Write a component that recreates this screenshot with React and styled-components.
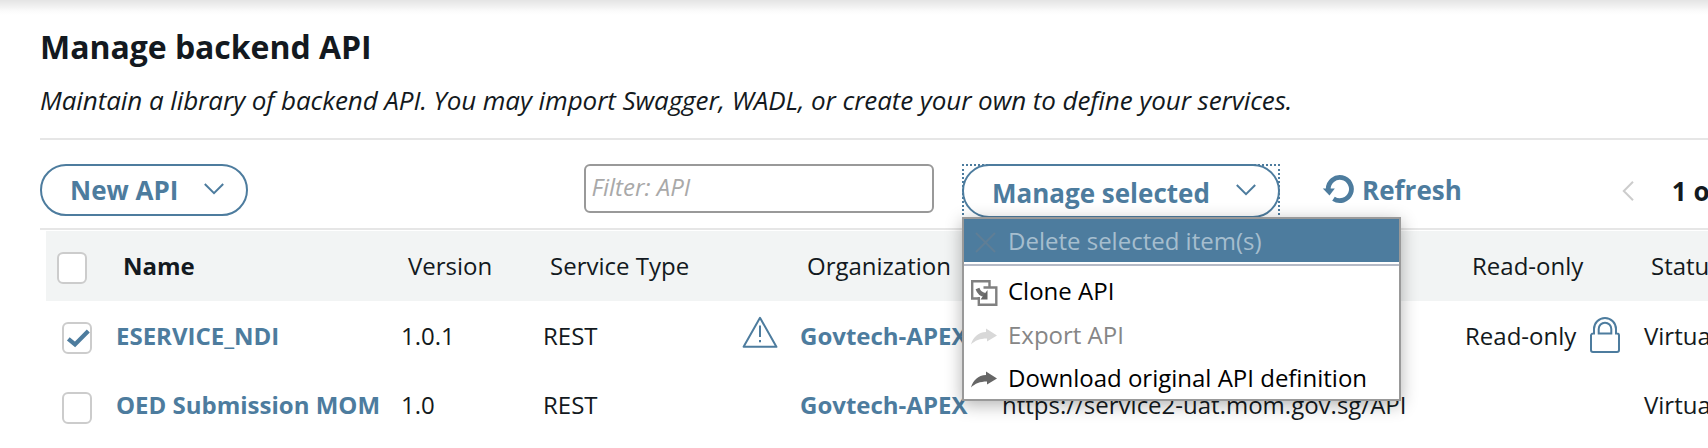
import React from 'react';
import styled, { createGlobalStyle } from 'styled-components';

const blue = '#4d7c9e';
const ink = '#131920';

const GlobalStyle = createGlobalStyle`
  * { box-sizing: border-box; }
  body {
    margin: 0;
    background: #fff;
    color: ${ink};
    font-family: 'Open Sans', 'Noto Sans', sans-serif;
    font-size: 24px;
    overflow: hidden;
  }
  svg { display: block; flex: none; }
`;

const Page = styled.main`
  height: 448px;
  overflow: hidden;
  padding-left: 40px;
  background: linear-gradient(#e4e4e4, #f0f0f0 6px, #fbfbfb 11px, #fff 15px) no-repeat;
`;

const PageHeader = styled.header`
  height: 140px;
  padding-top: 24px;
  border-bottom: 2px solid #e6e6e6;
  white-space: nowrap;
`;

const Title = styled.h1`
  margin: 0;
  font-size: 32px;
  line-height: 45px;
  font-weight: 700;
  letter-spacing: -0.04px;
`;

const Subtitle = styled.p`
  margin: 11px 0 0;
  font-size: 26px;
  line-height: 40px;
  font-style: italic;
  letter-spacing: -0.075px;
`;

const Toolbar = styled.div`
  display: flex;
  align-items: flex-start;
  height: 90px;
  padding-top: 24px;
  border-bottom: 2px solid #e6e6e6;
  white-space: nowrap;

  & > * { flex: none; }
`;

const PillButton = styled.button`
  display: flex;
  align-items: center;
  justify-content: space-between;
  width: ${(p) => p.$width}px;
  height: ${(p) => p.$height}px;
  padding: ${(p) => p.$top || 0}px 22px 0 28px;
  border: 2px solid ${blue};
  border-radius: 27px;
  background: #fff;
  color: ${blue};
  font: 700 26px 'Open Sans', sans-serif;
  line-height: 36px;

  svg { margin-bottom: ${(p) => (p.$top ? 6 : 2)}px; }
`;

const FilterInput = styled.input`
  width: 350px;
  height: 49px;
  margin-left: 336px;
  padding: 0 5.5px 5px;
  border: 2px solid #999;
  border-radius: 6px;
  background: #fff;
  font: italic 24px 'Open Sans', sans-serif;
  &::placeholder { color: #a9a9a9; opacity: 1; }
`;

const MenuAnchor = styled.div`
  position: relative;
  width: 318px;
  height: 55px;
  margin-left: 28px;
  outline: 2px dotted ${blue};
  outline-offset: -2px;
`;

const Menu = styled.ul`
  position: absolute;
  z-index: 2;
  top: 53px;
  left: 0;
  width: 439px;
  height: 184px;
  margin: 0;
  padding: 0;
  list-style: none;
  background: #fff;
  border: 2px solid #999;
  box-shadow: 0 4px 16px rgba(0, 0, 0, 0.3);
`;

const MenuItem = styled.li`
  display: flex;
  align-items: center;
  gap: 10px;
  height: ${(p) => (p.$active ? 43 : 43.4)}px;
  padding-left: 6px;
  color: ${(p) => (p.$disabled ? '#868686' : '#000')};
  line-height: 33px;

  svg { margin-top: 4px; }

  ${(p) => p.$active && `background: ${blue}; color: #a6bece;`}
`;

const MenuDivider = styled.li`
  height: 4px;
  margin-bottom: 3px;
  border-top: 2px solid #fff;
  background: #b5bac6;
`;

const RefreshLink = styled.a`
  display: flex;
  align-items: center;
  gap: 8px;
  height: 52px;
  margin-left: 42px;
  color: ${blue};
  font-weight: 700;
  font-size: 26px;

  svg { margin-bottom: 2px; }
`;

const Pager = styled.div`
  display: flex;
  align-items: center;
  gap: 38px;
  height: 54px;
  margin-left: 160px;
  font-weight: 700;
  font-size: 26px;
`;

const Table = styled.div`
  margin: 1px 0 0 6px;
`;

const Row = styled.div`
  display: grid;
  grid-template-columns: 70px 285px 142px 199px 58px 202px 463px 179px 200px;
  height: ${(p) => (p.$head ? 70 : 69.4)}px;
  background: ${(p) => (p.$head ? '#f2f4f4' : 'transparent')};
`;

const Cell = styled.div`
  display: flex;
  align-items: flex-start;
  padding: ${(p) => (p.$head ? '18px 0 0 7px' : '18px 0 0')};
  line-height: 33px;
  white-space: nowrap;
  font-weight: ${(p) => (p.$bold ? 700 : 400)};
`;

const LinkCell = styled(Cell)`
  font-weight: 700;
  color: ${blue};
`;

const CheckCell = styled.div`
  padding: 21.3px 0 0 ${(p) => (p.$head ? 11 : 16)}px;
`;

const WarnCell = styled.div`
  padding-top: 15px;
`;

const LockSlot = styled.span`
  margin: -2px 0 0 14px;
`;

const Box = styled.span`
  display: block;
  width: 30px;
  height: 32px;
  border: 2px solid #ccc;
  border-radius: 6px;
  background: #fff;
`;

const Chevron = () => (
  <svg width="20" height="12" viewBox="0 0 20 12" fill="none" stroke={blue} strokeWidth="2">
    <path d="M.8 1 10 10.2 19.2 1" />
  </svg>
);

const ChevronLeft = () => (
  <svg width="12" height="20" viewBox="0 0 12 20" fill="none" stroke="#ccc" strokeWidth="2">
    <path d="M11 .8 1.8 10 11 19.2" />
  </svg>
);

const RefreshIcon = () => (
  <svg width="32" height="30" viewBox="0 0 32 30">
    <path d="M6.2 15A11.6 11.6 0 1 1 11.5 24.8" fill="none" stroke={blue} strokeWidth="4.8" />
    <path d="M.8 14.500h12L7.500 21.500z" fill={blue} />
  </svg>
);

const CheckIcon = () => (
  <svg width="26" height="28" viewBox="0 0 26 28" fill="none" stroke={blue} strokeWidth="4.2">
    <path d="M4.3 14.8 11 20.4 24.3 7" />
  </svg>
);

const WarningIcon = () => (
  <svg width="36" height="32" viewBox="0 0 36 32" fill="none" stroke={blue} strokeWidth="2">
    <path d="M18 1.8 34.4 30.8H1.6z" strokeLinejoin="round" />
    <path d="M18 9.5V21M18 24v2.2" />
  </svg>
);

const LockIcon = () => (
  <svg width="30" height="36" viewBox="0 0 30 36" fill="none" stroke={blue} strokeWidth="2">
    <path d="M4 16.5V12a11 11 0 0 1 22 0v4.5h1a2 2 0 0 1 2 2V33a2 2 0 0 1-2 2H3a2 2 0 0 1-2-2V18.5a2 2 0 0 1 2-2z" />
    <path d="M8.7 16.5V12a6.3 6.3 0 0 1 12.600 0v4.5z" />
  </svg>
);

const DeleteIcon = () => (
  <svg width="28" height="28" viewBox="0 0 28 28" fill="none" stroke="#5f7e96" strokeWidth="2">
    <path d="M6 4 25 23M25 4 6 23" />
  </svg>
);

const CloneIcon = () => (
  <svg width="28" height="28" viewBox="0 0 28 28" fill="none" stroke="#808080" strokeWidth="2.4">
    <path d="M8 19.500H2.200V2.200H19.500V8" />
    <path d="M13.500 8.500H26.300V25.800H8.800V18" />
    <path d="M7.500 9.500C9 14 11 15.500 15 16" strokeWidth="4" stroke="#707070" />
    <path d="M17.500 11v9.500h-7z" fill="#666" stroke="none" />
  </svg>
);

const ShareIcon = ({ color }) => (
  <svg width="28" height="20" viewBox="0 0 28 20" fill={color}>
    <path d="M1 18.500C3 11 8 6.500 16 6V2.500L27 9.500 17 15.500v-3C10 12.500 5 14.500 1 18.500z" />
  </svg>
);

const rows = [
  { name: 'ESERVICE_NDI', version: '1.0.1', type: 'REST', warn: true, org: 'Govtech-APEX', url: '', readOnly: true, status: 'Virtualized', checked: true },
  { name: 'OED Submission MOM', version: '1.0', type: 'REST', org: 'Govtech-APEX', url: 'https://service2-uat.mom.gov.sg/API', status: 'Virtualized' },
];

const Checkbox = ({ checked }) => (
  <Box role="checkbox" aria-checked={!!checked}>{checked && <CheckIcon />}</Box>
);

export default function App() {
  return (
    <Page>
      <GlobalStyle />
      <PageHeader>
        <Title>Manage backend API</Title>
        <Subtitle>Maintain a library of backend API. You may import Swagger, WADL, or create your own to define your services.</Subtitle>
      </PageHeader>
      <Toolbar>
        <PillButton $width={208} $height={52}>New API<Chevron /></PillButton>
        <FilterInput placeholder="Filter: API" />
        <MenuAnchor>
          <PillButton $width={318} $height={54} $top={4}>Manage selected<Chevron /></PillButton>
          <Menu>
            <MenuItem $active><DeleteIcon />Delete selected item(s)</MenuItem>
            <MenuDivider />
            <MenuItem><CloneIcon />Clone API</MenuItem>
            <MenuItem $disabled><ShareIcon color="#d8d8d8" />Export API</MenuItem>
            <MenuItem><ShareIcon color="#666" />Download original API definition</MenuItem>
          </Menu>
        </MenuAnchor>
        <RefreshLink><RefreshIcon />Refresh</RefreshLink>
        <Pager><ChevronLeft />1 of 1</Pager>
      </Toolbar>
      <Table>
        <Row $head>
          <CheckCell $head><Checkbox /></CheckCell>
          <Cell $head $bold>Name</Cell>
          <Cell $head>Version</Cell>
          <Cell $head>Service Type</Cell>
          <Cell $head />
          <Cell $head>Organization</Cell>
          <Cell $head />
          <Cell $head>Read-only</Cell>
          <Cell $head>Status</Cell>
        </Row>
        {rows.map((r) => (
          <Row key={r.name}>
            <CheckCell><Checkbox checked={r.checked} /></CheckCell>
            <LinkCell>{r.name}</LinkCell>
            <Cell>{r.version}</Cell>
            <Cell>{r.type}</Cell>
            <WarnCell>{r.warn && <WarningIcon />}</WarnCell>
            <LinkCell>{r.org}</LinkCell>
            <Cell>{r.url}</Cell>
            <Cell>{r.readOnly && <>Read-only<LockSlot><LockIcon /></LockSlot></>}</Cell>
            <Cell>{r.status}</Cell>
          </Row>
        ))}
      </Table>
    </Page>
  );
}
